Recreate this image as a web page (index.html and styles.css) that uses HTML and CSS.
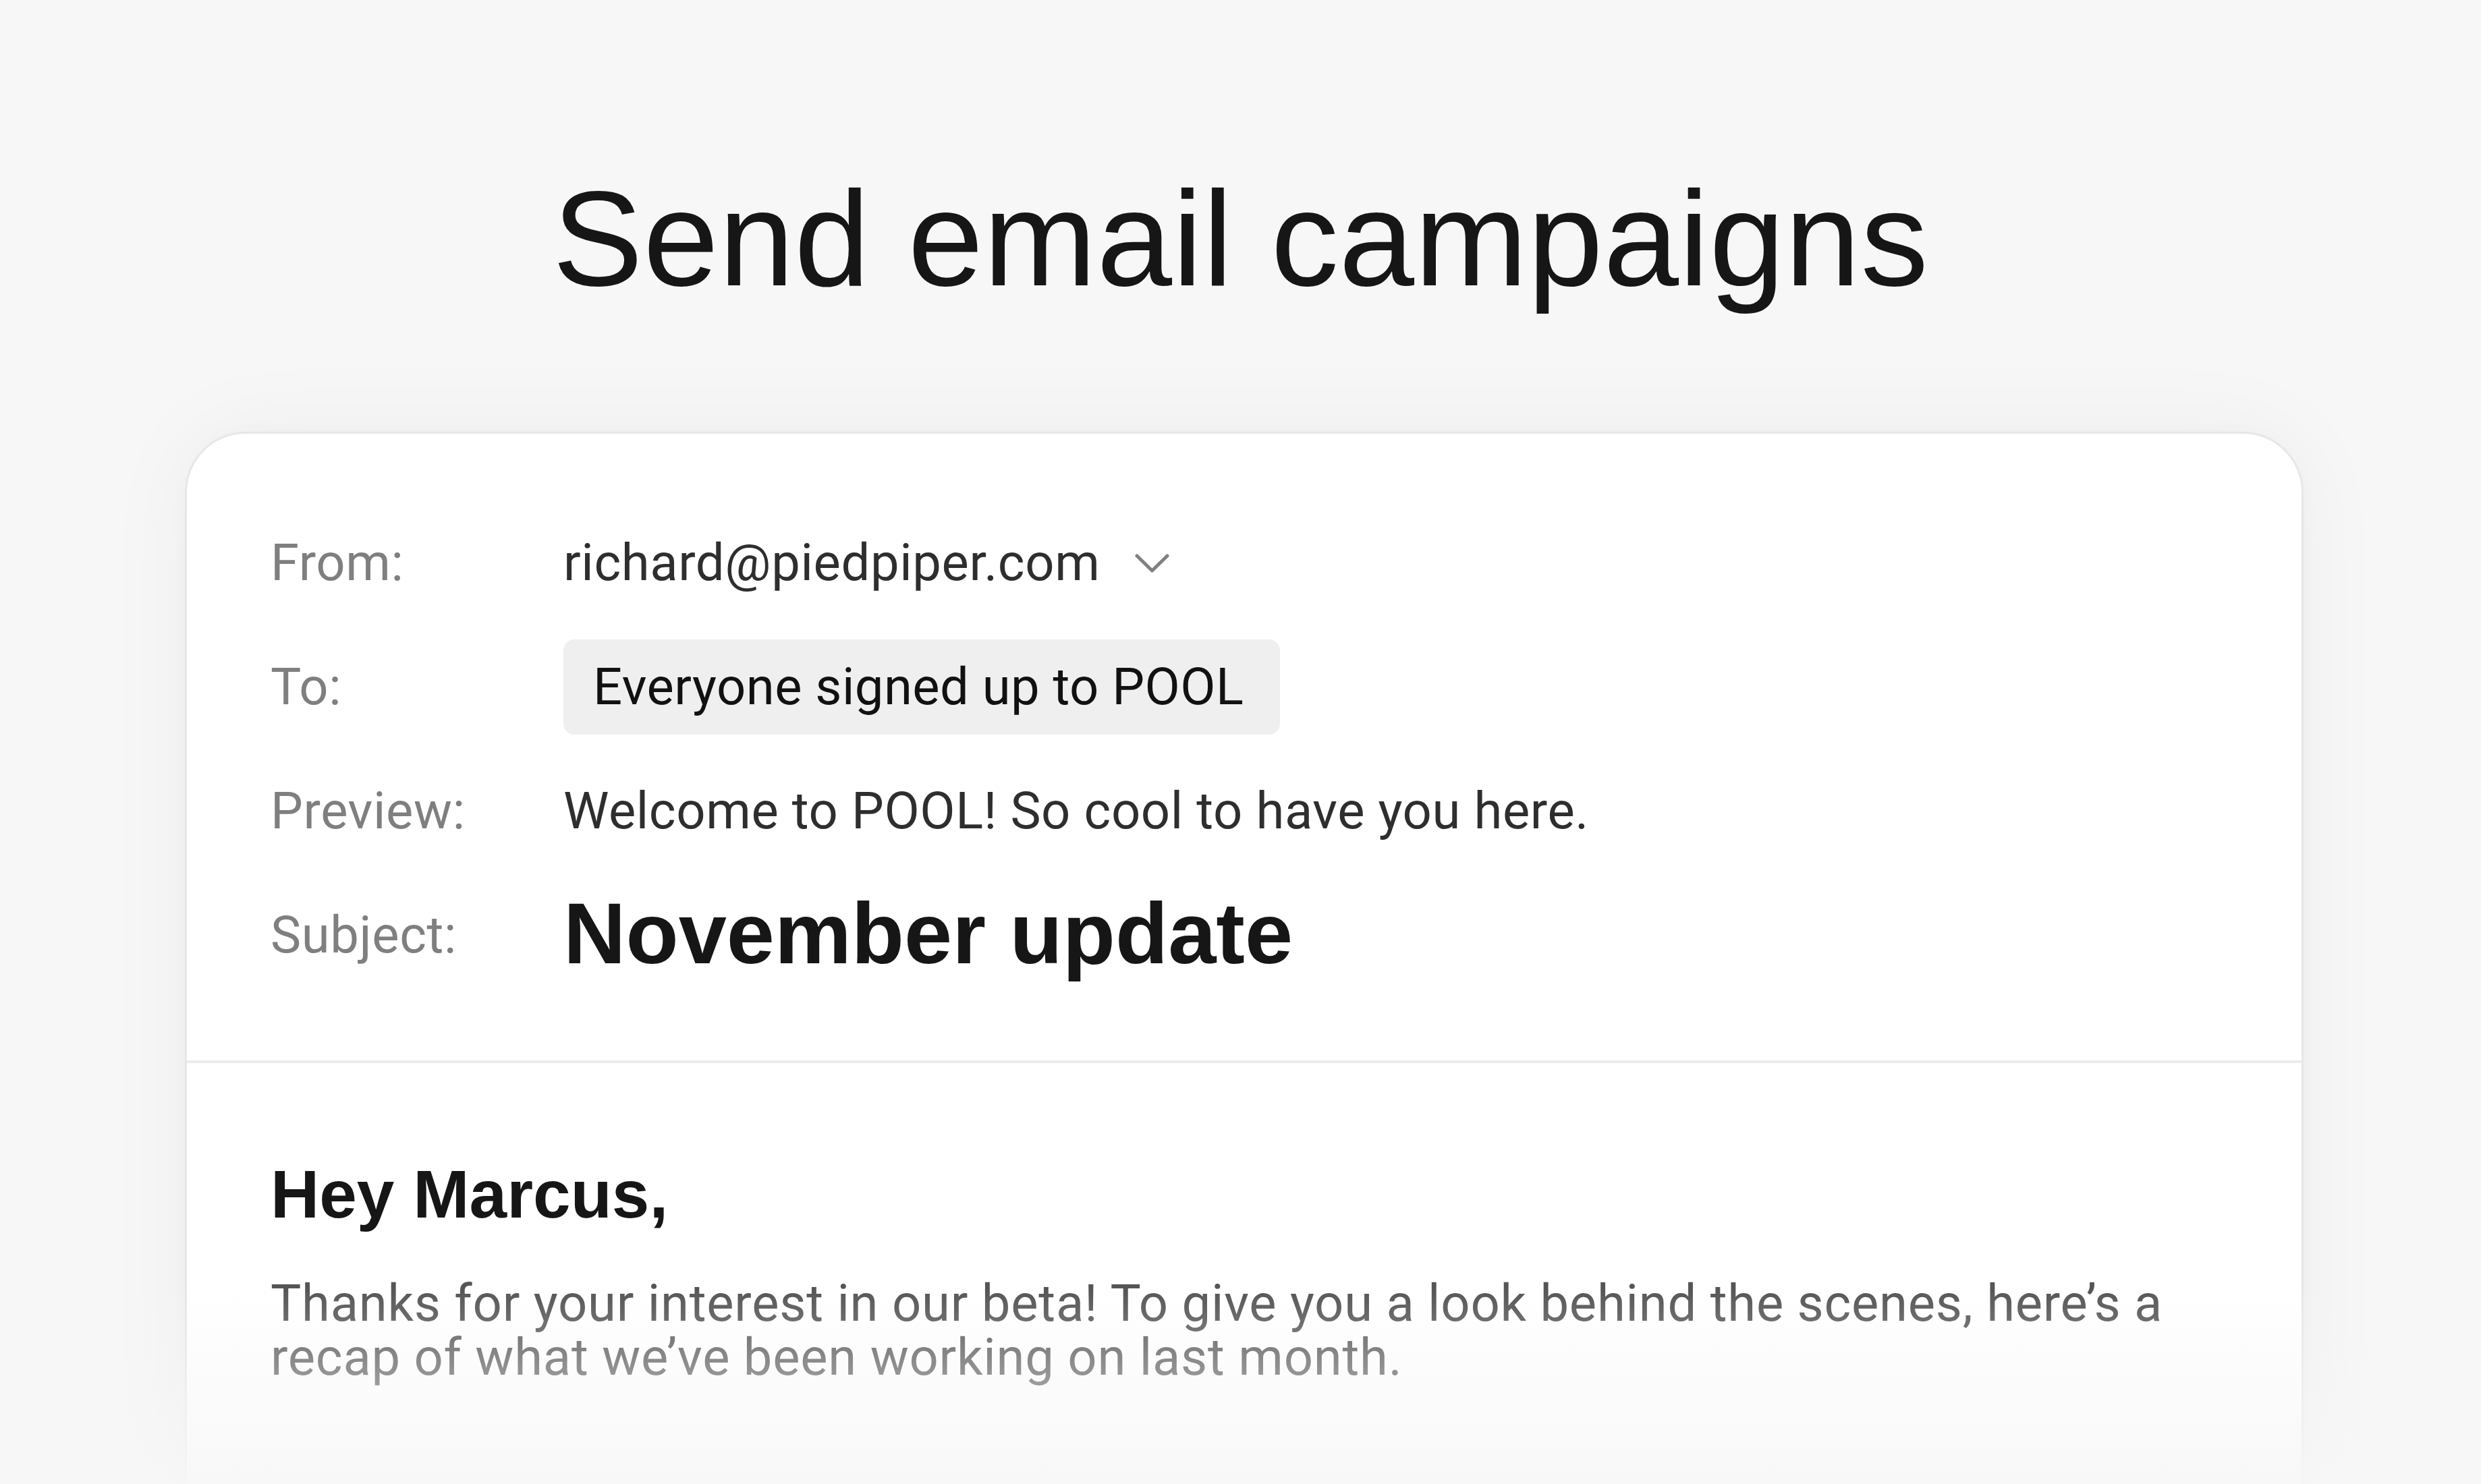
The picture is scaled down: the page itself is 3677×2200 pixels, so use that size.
FILE: index.html
```html
<!DOCTYPE html>
<html lang="en">
<head>
<meta charset="utf-8">
<title>Send email campaigns</title>
<link rel="stylesheet" href="styles.css">
</head>
<body>
<main class="page">
  <h1 class="title">Send email campaigns</h1>
  <section class="card">
    <div class="meta">
      <div class="label">From:</div>
      <div class="value">
        <span>richard@piedpiper.com</span>
        <svg class="chev" width="51" height="28" viewBox="0 0 51 28" aria-hidden="true"><polyline points="3,3 25.5,25 48,3" fill="none" stroke="#808080" stroke-width="5" stroke-linecap="round" stroke-linejoin="round"/></svg>
      </div>
      <div class="label">To:</div>
      <div class="value"><span class="chip">Everyone signed up to POOL</span></div>
      <div class="label">Preview:</div>
      <div class="value">Welcome to POOL! So cool to have you here.</div>
      <div class="label">Subject:</div>
      <div class="value subject">November update</div>
    </div>
    <div class="body">
      <h2 class="greet">Hey Marcus,</h2>
      <p class="text">Thanks for your interest in our beta! To give you a look behind the scenes, here’s a recap of what we’ve been working on last month.</p>
    </div>
  </section>
  <div class="fade"></div>
</main>
</body>
</html>
```

FILE: styles.css
```css
html, body {
  margin: 0;
  padding: 0;
  height: 2200px;
  overflow: hidden;
  background: #f7f7f7;
}

.page {
  position: relative;
  height: 2200px;
  padding-top: 253px;
  box-sizing: border-box;
  overflow: hidden;
}

.title {
  margin: 0;
  font-family: "Liberation Sans", Arial, sans-serif;
  font-weight: 400;
  font-size: 201px;
  line-height: 201px;
  color: #161616;
  text-align: center;
  letter-spacing: 0.3px;
}

.card {
  margin: 186px 0 0 274px;
  width: 3140px;
  box-sizing: border-box;
  height: 1700px;
  background: #ffffff;
  border: 3px solid #e7e7e7;
  border-radius: 90px;
  box-shadow: 0 0 140px rgba(0, 0, 0, 0.045), 0 0 30px rgba(0, 0, 0, 0.02);
}

.meta {
  display: grid;
  grid-template-columns: 434px 1fr;
  grid-auto-rows: 184px;
  align-items: center;
  justify-items: start;
  padding: 99px 124px 94px 124px;
  border-bottom: 4px solid #ebebeb;
  font-family: Roboto, "Noto Sans", sans-serif;
  font-size: 76px;
  letter-spacing: 0.6px;
}

.label {
  color: #7f7f7f;
}

.value {
  color: #2e2e2e;
  display: flex;
  align-items: center;
  gap: 52px;
}

.chev {
  display: block;
  margin-top: 2px;
}

.chip {
  display: inline-flex;
  align-items: center;
  height: 141px;
  padding: 0 54px 0 44px;
  background: #efefef;
  border-radius: 16px;
  color: #111111;
  letter-spacing: 0.45px;
}

.subject {
  font-family: "Liberation Sans", Arial, sans-serif;
  font-weight: 700;
  font-size: 128px;
  letter-spacing: 0;
  color: #161616;
  margin-top: -6px;
}

.body {
  padding: 137px 124px 0 124px;
}

.greet {
  margin: 0;
  font-family: "Liberation Sans", Arial, sans-serif;
  font-weight: 700;
  font-size: 100px;
  line-height: 115px;
  color: #161616;
}

.text {
  margin: 64px 0 0 0;
  font-family: Roboto, "Noto Sans", sans-serif;
  font-size: 76px;
  line-height: 80px;
  letter-spacing: 0.75px;
  color: #555555;
}

.fade {
  position: absolute;
  left: 0;
  right: 0;
  bottom: 0;
  height: 290px;
  background: linear-gradient(to bottom, rgba(247, 247, 247, 0) 0%, rgba(247, 247, 247, 0.9) 100%);
  pointer-events: none;
}
```
